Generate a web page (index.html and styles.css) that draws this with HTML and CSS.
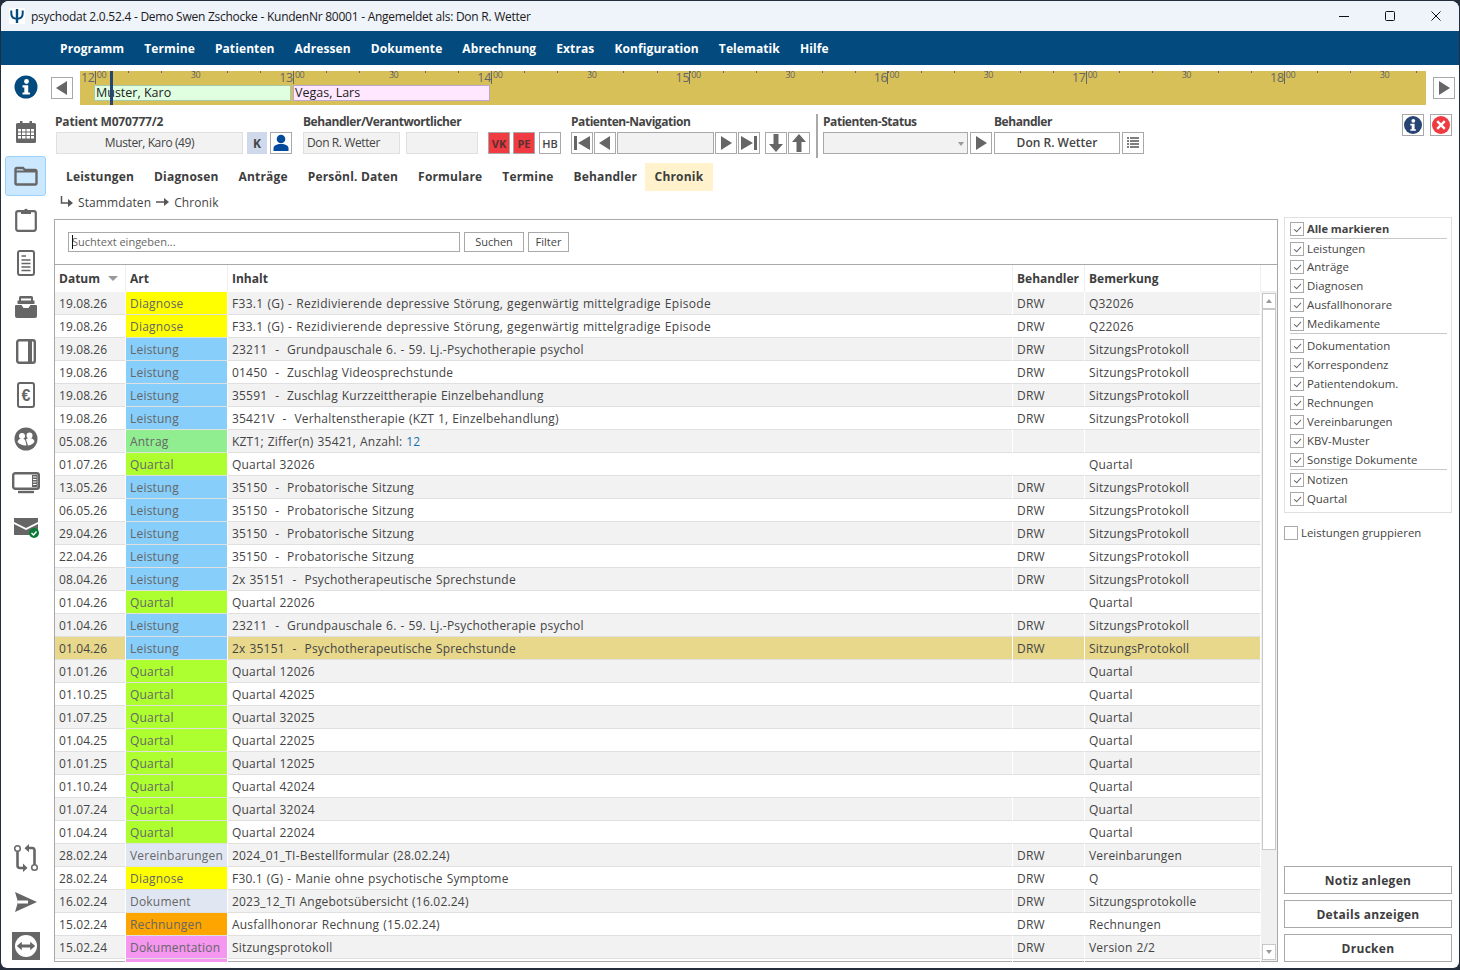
FILE: index.html
```html
<!DOCTYPE html>
<html lang="de">
<head>
<meta charset="utf-8">
<title>psychodat</title>
<link rel="stylesheet" href="styles.css">
</head>
<body>
<div class="window">
  <header class="titlebar">
    <svg class="logo" width="16" height="16" viewBox="0 0 16 16"><rect width="16" height="16" fill="#fff"/><path d="M2.300 2.500v3c0 3.300 2.200 5.200 5.700 5.200s5.700-1.900 5.700-5.200v-3" fill="none" stroke="#034a7e" stroke-width="2"/><path d="M8 1v14" stroke="#034a7e" stroke-width="2.400"/></svg>
    <span class="title-text">psychodat 2.0.52.4 - Demo Swen Zschocke - KundenNr 80001 - Angemeldet als: Don R. Wetter</span>
    <div class="winbtns">
      <svg width="12" height="12" viewBox="0 0 12 12"><path d="M1 6.500h10" stroke="#111" fill="none"/></svg>
      <svg width="12" height="12" viewBox="0 0 12 12"><rect x="1.500" y="1.500" width="9" height="9" rx="1" stroke="#111" fill="none"/></svg>
      <svg width="12" height="12" viewBox="0 0 12 12"><path d="M1.500 1.500l9 9M10.500 1.500l-9 9" stroke="#111" fill="none"/></svg>
    </div>
  </header>
  <nav class="menubar">
    <a>Programm</a><a>Termine</a><a>Patienten</a><a>Adressen</a><a>Dokumente</a><a>Abrechnung</a><a>Extras</a><a>Konfiguration</a><a>Telematik</a><a>Hilfe</a>
  </nav>
  <div class="body">
    <aside class="rail">
      <div class="rail-item"><svg width="24" height="24" viewBox="0 0 24 24"><circle cx="12" cy="12" r="11.500" fill="#034a7e"/><circle cx="12.500" cy="6.500" r="2.400" fill="#fff"/><path d="M8.500 10.300h5.700v7.200h1.700v2.100H8.500v-2.100h1.800v-5.100H8.500z" fill="#fff"/></svg></div>
      <div class="rail-item"><svg width="22" height="24" viewBox="0 0 22 24"><path d="M1 5.500A1.500 1.500 0 0 1 2.500 4H5V2h2.500v2h7V2H17v2h2.500A1.500 1.500 0 0 1 21 5.500v17a1.500 1.500 0 0 1-1.500 1.500h-17A1.500 1.500 0 0 1 1 22.500z" fill="#666"/><path d="M3 10h3v2.500H3zm4 0h3.500v2.500H7zm4.500 0H15v2.500h-3.500zm4.500 0h3v2.500h-3zM3 13.500h3V16H3zm4 0h3.500V16H7zm4.500 0H15V16h-3.500zm4.500 0h3V16h-3zM3 17h3v2.500H3zm4 0h3.500v2.500H7zm4.500 0H15v2.500h-3.500zm4.500 0h3v2.500h-3z" fill="#fff"/></svg></div>
      <div class="rail-item active"><svg width="24" height="20" viewBox="0 0 24 20"><path d="M1.500 3.500a1.500 1.500 0 0 1 1.500-1.500h6l2 2h10a1.500 1.500 0 0 1 1.500 1.500V17a1.500 1.500 0 0 1-1.500 1.500H3A1.500 1.500 0 0 1 1.500 17z" fill="none" stroke="#666" stroke-width="2.400"/><path d="M1.500 5.500h21" stroke="#666" stroke-width="1.800"/></svg></div>
      <div class="rail-item"><svg width="22" height="25" viewBox="0 0 22 25"><rect x="1.200" y="4.200" width="19.600" height="19.600" rx="2" fill="none" stroke="#666" stroke-width="2.200"/><path d="M6 3h3.200a2 2 0 0 1 3.600 0H16v4H6z" fill="#666"/></svg></div>
      <div class="rail-item"><svg width="18" height="26" viewBox="0 0 18 26"><rect x="1" y="1" width="16" height="24" rx="2" fill="none" stroke="#666" stroke-width="2"/><path d="M4.500 6H9M4.500 10h9M4.500 13.500h9M4.500 17h9M4.500 20.500h9" stroke="#666" stroke-width="1.700"/></svg></div>
      <div class="rail-item"><svg width="24" height="24" viewBox="0 0 24 24"><path d="M5 8V2.500A1.500 1.500 0 0 1 6.500 1h11A1.500 1.500 0 0 1 19 2.500V8h-2V3.500H7V8z" fill="#666"/><path d="M3.500 5.500h17V9h-17z" fill="#666"/><path d="M1 11a1 1 0 0 1 1-1h5.500l2 3h5l2-3H22a1 1 0 0 1 1 1v10a2 2 0 0 1-2 2H3a2 2 0 0 1-2-2z" fill="#666"/></svg></div>
      <div class="rail-item"><svg width="20" height="25" viewBox="0 0 20 25"><rect x="1.200" y="1.200" width="17.600" height="22.600" rx="2" fill="none" stroke="#666" stroke-width="2.400"/><path d="M12 1v23h4V1z" fill="#666"/></svg></div>
      <div class="rail-item"><svg width="18" height="26" viewBox="0 0 18 26"><rect x="1" y="1" width="16" height="24" rx="2" fill="none" stroke="#666" stroke-width="2"/><text class="euro" x="9" y="19" text-anchor="middle">€</text></svg></div>
      <div class="rail-item"><svg width="24" height="24" viewBox="0 0 24 24"><circle cx="12" cy="12" r="11.500" fill="#666"/><circle cx="8" cy="9" r="3" fill="#fff"/><circle cx="15.500" cy="8.500" r="3" fill="#fff"/><path d="M3.500 15c.5-2.500 2.500-3.500 4.500-3.500s3 1 3.500 2.500l1 4.500c-3 .5-7-1-9-3.500z" fill="#fff"/><path d="M12 12.500c1-1 2.200-1.500 3.500-1.500 2.500 0 4.500 1.500 5 3.500-1 2-3 3.500-6.500 4z" fill="#fff"/></svg></div>
      <div class="rail-item"><svg width="28" height="22" viewBox="0 0 28 22"><rect x="1.200" y="1.200" width="25.600" height="15.600" rx="2" fill="none" stroke="#666" stroke-width="2.400"/><path d="M20 3h5.500v12H20z" fill="#666"/><path d="M21 5h3.500M21 7.500h3.500M21 10h3.500M21 12.500h3.500" stroke="#fff"/><path d="M6 20h16" stroke="#666" stroke-width="2.400"/></svg></div>
      <div class="rail-item"><svg width="26" height="22" viewBox="0 0 26 22"><path d="M1 2h24v4L13 12 1 6z" fill="#666"/><path d="M1 8l12 6 12-6v11H1z" fill="#666"/><circle cx="21" cy="17" r="5" fill="#0a7a36"/><path d="M18.500 17l2 2 3-3.500" stroke="#fff" stroke-width="1.400" fill="none"/></svg></div>
      <div class="rail-spacer"></div>
      <div class="rail-item"><svg width="26" height="28" viewBox="0 0 26 28"><circle cx="4.500" cy="4.500" r="2.800" fill="none" stroke="#666" stroke-width="1.500"/><circle cx="21.500" cy="23.500" r="2.800" fill="none" stroke="#666" stroke-width="1.500"/><path d="M4.500 7.500v14a2.500 2.500 0 0 0 2.500 2.500h4M21.500 20.500v-14A2.500 2.500 0 0 0 19 4h-4" fill="none" stroke="#666" stroke-width="2.600"/><path d="M10 19.500l4.500 4.500-4.500 4zM16 0l-4.500 4.300 4.500 4z" fill="#666"/></svg></div>
      <div class="rail-item"><svg width="24" height="22" viewBox="0 0 24 22"><path d="M1 1l22 10L1 21l3-10z" fill="#666"/><path d="M4 9.500h10v3H4z" fill="#fff"/></svg></div>
      <div class="rail-item"><svg width="28" height="28" viewBox="0 0 28 28"><rect width="28" height="28" fill="#666"/><circle cx="14" cy="14" r="11" fill="#fff"/><path d="M4.800 14l5-4.200v2.600h8.400V9.800l5 4.200-5 4.200v-2.600H9.800v2.600z" fill="#666"/></svg></div>
    </aside>
    <main class="content">
      <div class="timeline-row">
        <button class="btn arrow-btn"><svg width="12" height="14" viewBox="0 0 12 14"><path d="M11 0v14L0 7z" fill="#666"/></svg></button>
        <div class="timeline">
          <div class="hour"><span class="hnum">12</span><span class="h00">00</span><span class="h30">30</span></div>
          <div class="hour"><span class="hnum">13</span><span class="h00">00</span><span class="h30">30</span></div>
          <div class="hour"><span class="hnum">14</span><span class="h00">00</span><span class="h30">30</span></div>
          <div class="hour"><span class="hnum">15</span><span class="h00">00</span><span class="h30">30</span></div>
          <div class="hour"><span class="hnum">16</span><span class="h00">00</span><span class="h30">30</span></div>
          <div class="hour"><span class="hnum">17</span><span class="h00">00</span><span class="h30">30</span></div>
          <div class="hour"><span class="hnum">18</span><span class="h00">00</span><span class="h30">30</span></div>
          <div class="appt appt-a">Muster, Karo</div>
          <div class="appt appt-b">Vegas, Lars</div>
          <div class="now"></div>
        </div>
        <button class="btn arrow-btn"><svg width="12" height="14" viewBox="0 0 12 14"><path d="M1 0v14l11-7z" fill="#666"/></svg></button>
      </div>

      <div class="patient-bar">
        <div class="group g-patient">
          <label class="lbl lbl-wide">Patient M070777/2</label>
          <div class="fields">
            <div class="field f-name">Muster, Karo (49)</div>
            <div class="kbadge">K</div>
            <button class="btn sq"><svg width="18" height="18" viewBox="0 0 18 18"><circle cx="9" cy="5" r="4.300" fill="#034a9c"/><path d="M1.500 17v-2.500C1.500 11.500 4.500 10 9 10s7.500 1.500 7.500 4.500V17z" fill="#034a9c"/></svg></button>
          </div>
        </div>
        <div class="group g-beh">
          <label class="lbl">Behandler/Verantwortlicher</label>
          <div class="fields">
            <div class="field f-beh">Don R. Wetter</div>
            <div class="field f-empty"></div>
            <button class="btn sq red vk">VK</button>
            <button class="btn sq red">PE</button>
            <button class="btn sq hb">HB</button>
          </div>
        </div>
        <div class="group g-nav">
          <label class="lbl">Patienten-Navigation</label>
          <div class="fields">
            <button class="btn sq"><svg width="16" height="14" viewBox="0 0 16 14"><path d="M0 0h3v14H0zM16 0v14L4 7z" fill="#666"/></svg></button>
            <button class="btn sq"><svg width="12" height="14" viewBox="0 0 12 14"><path d="M11 0v14L0 7z" fill="#666"/></svg></button>
            <div class="field f-nav"></div>
            <button class="btn sq"><svg width="12" height="14" viewBox="0 0 12 14"><path d="M1 0v14l11-7z" fill="#666"/></svg></button>
            <button class="btn sq"><svg width="16" height="14" viewBox="0 0 16 14"><path d="M13 0h3v14h-3zM0 0v14l12-7z" fill="#666"/></svg></button>
            <button class="btn sq gap-l"><svg width="14" height="18" viewBox="0 0 14 18"><path d="M4.500 0h5v10H14l-7 8-7-8h4.500z" fill="#666"/></svg></button>
            <button class="btn sq"><svg width="14" height="18" viewBox="0 0 14 18"><path d="M4.500 18h5V8H14L7 0 0 8h4.500z" fill="#666"/></svg></button>
          </div>
        </div>
        <div class="vsep"></div>
        <div class="group g-status">
          <label class="lbl">Patienten-Status</label>
          <div class="fields">
            <div class="field combo"><span class="caret"></span></div>
            <button class="btn sq"><svg width="12" height="14" viewBox="0 0 12 14"><path d="M1 0v14l11-7z" fill="#666"/></svg></button>
          </div>
        </div>
        <div class="group g-doc">
          <label class="lbl">Behandler</label>
          <div class="fields">
            <button class="btn doc-btn">Don R. Wetter</button>
            <button class="btn sq"><svg width="12" height="12" viewBox="0 0 12 12"><path d="M0 1h2M0 4h2M0 7h2M0 10h2M3 1h9M3 4h9M3 7h9M3 10h9" stroke="#555" stroke-width="1.300"/></svg></button>
          </div>
        </div>
        <div class="corner-btns">
          <button class="btn sq"><svg width="18" height="18" viewBox="0 0 18 18"><circle cx="9" cy="9" r="9" fill="#274472"/><circle cx="9.300" cy="4.800" r="1.900" fill="#fff"/><path d="M6.300 7.800h4.300v5.400h1.300v1.600H6.300v-1.600h1.400V9.400H6.300z" fill="#fff"/></svg></button>
          <button class="btn sq"><svg width="18" height="18" viewBox="0 0 18 18"><circle cx="9" cy="9" r="9" fill="#ee3a40"/><path d="M5.200 5.200l7.600 7.600M12.800 5.200l-7.600 7.600" stroke="#fff" stroke-width="2.400"/></svg></button>
        </div>
      </div>

      <div class="tabs">
        <a>Leistungen</a><a>Diagnosen</a><a>Anträge</a><a>Persönl. Daten</a><a>Formulare</a><a>Termine</a><a>Behandler</a><a class="on">Chronik</a>
      </div>
      <div class="crumb">
        <svg width="13" height="12" viewBox="0 0 13 12"><path d="M1.500 0v7h8" fill="none" stroke="#555" stroke-width="1.500"/><path d="M8 3l5 4-5 4z" fill="#555"/></svg>
        <span>Stammdaten</span>
        <svg width="13" height="10" viewBox="0 0 13 10"><path d="M0 5h9" stroke="#555" stroke-width="1.500"/><path d="M8 1l5 4-5 4z" fill="#555"/></svg>
        <span>Chronik</span>
      </div>

      <div class="work">
        <section class="panel">
          <div class="searchbar">
            <div class="search-input"><i class="cursor"></i>Suchtext eingeben...</div>
            <button class="btn small">Suchen</button>
            <button class="btn small filter">Filter</button>
          </div>
          <div class="grid">
            <div class="table-clip">
              <table class="chronik">
                <colgroup><col class="c1"><col class="c2"><col class="c3"><col class="c4"><col class="c5"></colgroup>
                <thead><tr><th>Datum <span class="sort"></span></th><th>Art</th><th>Inhalt</th><th>Behandler</th><th>Bemerkung</th></tr></thead>
                <tbody>
                  <tr><td>19.08.26</td><td class="k-dia">Diagnose</td><td class="wide">F33.1 (G) - Rezidivierende depressive Störung, gegenwärtig mittelgradige Episode</td><td>DRW</td><td>Q32026</td></tr>
                  <tr><td>19.08.26</td><td class="k-dia">Diagnose</td><td class="wide">F33.1 (G) - Rezidivierende depressive Störung, gegenwärtig mittelgradige Episode</td><td>DRW</td><td>Q22026</td></tr>
                  <tr><td>19.08.26</td><td class="k-lei">Leistung</td><td>23211 &nbsp;-&nbsp; Grundpauschale 6. - 59. Lj.-Psychotherapie psychol</td><td>DRW</td><td>SitzungsProtokoll</td></tr>
                  <tr><td>19.08.26</td><td class="k-lei">Leistung</td><td>01450 &nbsp;-&nbsp; Zuschlag Videosprechstunde</td><td>DRW</td><td>SitzungsProtokoll</td></tr>
                  <tr><td>19.08.26</td><td class="k-lei">Leistung</td><td>35591 &nbsp;-&nbsp; Zuschlag Kurzzeittherapie Einzelbehandlung</td><td>DRW</td><td>SitzungsProtokoll</td></tr>
                  <tr><td>19.08.26</td><td class="k-lei">Leistung</td><td>35421V &nbsp;-&nbsp; Verhaltenstherapie (KZT 1, Einzelbehandlung)</td><td>DRW</td><td>SitzungsProtokoll</td></tr>
                  <tr><td>05.08.26</td><td class="k-ant">Antrag</td><td>KZT1; Ziffer(n) 35421, Anzahl: <span class="num">12</span></td><td></td><td></td></tr>
                  <tr><td>01.07.26</td><td class="k-qua">Quartal</td><td>Quartal 32026</td><td></td><td>Quartal</td></tr>
                  <tr><td>13.05.26</td><td class="k-lei">Leistung</td><td>35150 &nbsp;-&nbsp; Probatorische Sitzung</td><td>DRW</td><td>SitzungsProtokoll</td></tr>
                  <tr><td>06.05.26</td><td class="k-lei">Leistung</td><td>35150 &nbsp;-&nbsp; Probatorische Sitzung</td><td>DRW</td><td>SitzungsProtokoll</td></tr>
                  <tr><td>29.04.26</td><td class="k-lei">Leistung</td><td>35150 &nbsp;-&nbsp; Probatorische Sitzung</td><td>DRW</td><td>SitzungsProtokoll</td></tr>
                  <tr><td>22.04.26</td><td class="k-lei">Leistung</td><td>35150 &nbsp;-&nbsp; Probatorische Sitzung</td><td>DRW</td><td>SitzungsProtokoll</td></tr>
                  <tr><td>08.04.26</td><td class="k-lei">Leistung</td><td>2x 35151 &nbsp;-&nbsp; Psychotherapeutische Sprechstunde</td><td>DRW</td><td>SitzungsProtokoll</td></tr>
                  <tr><td>01.04.26</td><td class="k-qua">Quartal</td><td>Quartal 22026</td><td></td><td>Quartal</td></tr>
                  <tr><td>01.04.26</td><td class="k-lei">Leistung</td><td>23211 &nbsp;-&nbsp; Grundpauschale 6. - 59. Lj.-Psychotherapie psychol</td><td>DRW</td><td>SitzungsProtokoll</td></tr>
                  <tr class="sel"><td>01.04.26</td><td class="k-lei">Leistung</td><td>2x 35151 &nbsp;-&nbsp; Psychotherapeutische Sprechstunde</td><td>DRW</td><td>SitzungsProtokoll</td></tr>
                  <tr><td>01.01.26</td><td class="k-qua">Quartal</td><td>Quartal 12026</td><td></td><td>Quartal</td></tr>
                  <tr><td>01.10.25</td><td class="k-qua">Quartal</td><td>Quartal 42025</td><td></td><td>Quartal</td></tr>
                  <tr><td>01.07.25</td><td class="k-qua">Quartal</td><td>Quartal 32025</td><td></td><td>Quartal</td></tr>
                  <tr><td>01.04.25</td><td class="k-qua">Quartal</td><td>Quartal 22025</td><td></td><td>Quartal</td></tr>
                  <tr><td>01.01.25</td><td class="k-qua">Quartal</td><td>Quartal 12025</td><td></td><td>Quartal</td></tr>
                  <tr><td>01.10.24</td><td class="k-qua">Quartal</td><td>Quartal 42024</td><td></td><td>Quartal</td></tr>
                  <tr><td>01.07.24</td><td class="k-qua">Quartal</td><td>Quartal 32024</td><td></td><td>Quartal</td></tr>
                  <tr><td>01.04.24</td><td class="k-qua">Quartal</td><td>Quartal 22024</td><td></td><td>Quartal</td></tr>
                  <tr><td>28.02.24</td><td class="k-doc">Vereinbarungen</td><td>2024_01_TI-Bestellformular (28.02.24)</td><td>DRW</td><td>Vereinbarungen</td></tr>
                  <tr><td>28.02.24</td><td class="k-dia">Diagnose</td><td>F30.1 (G) - Manie ohne psychotische Symptome</td><td>DRW</td><td>Q</td></tr>
                  <tr><td>16.02.24</td><td class="k-doc">Dokument</td><td>2023_12_TI Angebotsübersicht (16.02.24)</td><td>DRW</td><td>Sitzungsprotokolle</td></tr>
                  <tr><td>15.02.24</td><td class="k-rec">Rechnungen</td><td>Ausfallhonorar Rechnung (15.02.24)</td><td>DRW</td><td>Rechnungen</td></tr>
                  <tr><td>15.02.24</td><td class="k-vio">Dokumentation</td><td>Sitzungsprotokoll</td><td>DRW</td><td>Version 2/2</td></tr>
                  <tr><td></td><td class="k-vio"></td><td></td><td></td><td></td></tr>
                </tbody>
              </table>
            </div>
            <div class="scrollcol">
              <div class="sb-head"></div>
              <div class="sb-track">
                <div class="sb-btn"><span class="tri up"></span></div>
                <div class="sb-thumb"></div>
                <div class="sb-btn"><span class="tri down"></span></div>
              </div>
            </div>
          </div>
        </section>
        <aside class="side">
          <div class="checks">
            <div class="chk strong"><span class="box"></span>Alle markieren</div>
            <hr>
            <div class="chk"><span class="box"></span>Leistungen</div>
            <div class="chk tight"><span class="box"></span>Anträge</div>
            <div class="chk"><span class="box"></span>Diagnosen</div>
            <div class="chk"><span class="box"></span>Ausfallhonorare</div>
            <div class="chk"><span class="box"></span>Medikamente</div>
            <hr class="wide">
            <div class="chk"><span class="box"></span>Dokumentation</div>
            <div class="chk"><span class="box"></span>Korrespondenz</div>
            <div class="chk"><span class="box"></span>Patientendokum.</div>
            <div class="chk"><span class="box"></span>Rechnungen</div>
            <div class="chk"><span class="box"></span>Vereinbarungen</div>
            <div class="chk"><span class="box"></span>KBV-Muster</div>
            <div class="chk"><span class="box"></span>Sonstige Dokumente</div>
            <hr>
            <div class="chk"><span class="box"></span>Notizen</div>
            <div class="chk"><span class="box"></span>Quartal</div>
          </div>
          <div class="chk group-chk"><span class="box off"></span>Leistungen gruppieren</div>
          <div class="side-actions">
            <button class="btn action">Notiz anlegen</button>
            <button class="btn action">Details anzeigen</button>
            <button class="btn action">Drucken</button>
          </div>
        </aside>
      </div>
    </main>
  </div>
</div>
</body>
</html>
```
FILE: styles.css
```css
* { box-sizing: border-box; }
html, body { margin: 0; height: 970px; overflow: hidden; background: #232d3b; }
body { font-family: "Open Sans", "Noto Sans", sans-serif; font-size: 12px; color: #444; }
.window { margin: 1px 1px 2px 1px; height: 967px; background: #fff; border-radius: 8px 8px 6px 6px; overflow: hidden; display: flex; flex-direction: column; }

.titlebar { height: 30px; flex: none; background: #eff3fa; display: flex; align-items: center; color: #1a1a1a; }
.logo { margin-left: 8px; flex: none; }
.title-text { margin-left: 6px; letter-spacing: -0.25px; }
.winbtns { margin-left: auto; display: flex; gap: 34px; padding-right: 17px; }

.menubar { height: 34px; flex: none; background: #034a7e; display: flex; align-items: center; gap: 20px; padding-left: 59px; color: #fff; font-weight: 700; letter-spacing: 0.1px; }

.body { flex: 1; display: flex; min-height: 0; }
.rail { width: 47px; flex: none; display: flex; flex-direction: column; align-items: center; padding-left: 2px; }
.rail-item { width: 41px; height: 44px; flex: none; display: flex; align-items: center; justify-content: center; border: 1px solid transparent; border-radius: 3px; }
.rail-item.active { height: 40px; margin: 3px 0 1px; background: #cce8ff; border-color: #99d1ff; }
.rail-spacer { flex: 1; }
.euro { font: 700 16px "Liberation Sans", sans-serif; fill: #666; }

.content { flex: 1; min-width: 0; display: flex; flex-direction: column; padding-left: 3px; }
.btn { font: inherit; color: inherit; background: #fff; border: 1px solid #a9a9a9; padding: 0; display: flex; align-items: center; justify-content: center; }

.timeline-row { height: 34px; margin-top: 6px; flex: none; display: flex; align-items: center; }
.arrow-btn { width: 22px; height: 22px; flex: none; }
.timeline { width: 1346px; height: 34px; margin: 0 7px; background-color: #d8c058; padding-left: 14.700px; display: flex; position: relative;
  background-image: repeating-linear-gradient(90deg, #666 0 1px, transparent 1px 33.030px); background-repeat: no-repeat; background-size: 100% 2px; background-position: 14.700px 0; }
.hour { flex: 0 0 198.200px; height: 13px; border-left: 1px solid #666; position: relative; color: #666; }
.hour:last-of-type { flex-basis: 130px; }
.hnum { position: absolute; right: calc(100% + 1px); top: -1px; font-size: 12.500px; line-height: 16px; letter-spacing: -0.3px; }
.h00 { position: absolute; left: 1px; top: -2px; font-size: 9px; line-height: 12px; letter-spacing: -0.4px; }
.h30 { position: absolute; left: 95px; top: -2px; font-size: 9px; line-height: 12px; letter-spacing: -0.4px; }
.appt { position: absolute; top: 14px; height: 16px; width: 197px; border: 1px solid #a8c8a8; color: #222; line-height: 14px; padding-left: 1px; font-size: 12.500px; }
.appt-a { left: 14px; background: #e0ffe0; }
.appt-b { left: 213px; background: #ffe8ff; border-color: #b8a8d0; }
.now { position: absolute; left: 30px; top: 0; width: 3px; height: 34px; background: #274472; }

.patient-bar { height: 51px; margin-top: 4px; padding-left: 4px; flex: none; display: flex; align-items: flex-start; position: relative; }
.group { display: flex; flex-direction: column; padding-top: 5px; }
.lbl { font-weight: 700; line-height: 16px; height: 17px; white-space: nowrap; letter-spacing: -0.45px; }
.lbl-wide { letter-spacing: -0.18px; }
.fields { display: flex; gap: 1px; height: 22px; margin-top: 1px; }
.field { height: 22px; background: #f2f2f2; border: 1px solid #e0e0e0; display: flex; align-items: center; justify-content: center; padding-bottom: 1px; letter-spacing: -0.4px; }
.sq { width: 22px; height: 22px; flex: none; }
.g-patient { width: 248px; }
.f-name { width: 187px; margin-left: 1px; }
.kbadge { width: 20px; height: 22px; background: #d0d8ec; font-weight: 700; display: flex; align-items: center; justify-content: center; margin: 0 2px 0 3px; }
.g-beh { width: 268px; }
.f-beh { width: 97px; justify-content: flex-start; padding-left: 3px; }
.f-empty { width: 72px; margin-left: 5px; }
.red { background: #ef3b41; font-weight: 700; color: #5a3030; font-size: 11px; }
.vk { margin-left: 9px; margin-right: 2px; }
.red + .hb { margin-left: 3px; }
.hb { font-weight: 600; font-size: 11px; }
.g-nav { width: 245px; }
.f-nav { width: 97px; border-color: #a9a9a9; }
.gap-l { margin-left: 4px; }
.vsep { width: 2px; height: 44px; margin-top: 5px; background: #a9a9a9; margin-right: 5px; }
.g-status { width: 171px; }
.combo { width: 145px; border-color: #a9a9a9; position: relative; }
.caret { position: absolute; right: 3px; top: 9px; border: 3px solid transparent; border-top: 4px solid #999; border-bottom: 0; }
.combo + .sq { margin-left: 1px; }
.doc-btn { width: 126px; height: 22px; font-weight: 600; margin-right: 1px; padding-bottom: 2px; }
.corner-btns { position: absolute; left: 1351px; top: 5px; display: flex; gap: 6px; }

.tabs { height: 28px; margin-top: 3px; padding-left: 5px; flex: none; display: flex; gap: 0; }
.tabs a { font-weight: 700; padding: 0 10px; line-height: 28px; color: #3d3d3d; letter-spacing: 0.18px; }
.tabs a.on { background: #fff2cc; padding: 0 9.500px; margin-left: -2px; }
.crumb { height: 24px; padding: 0 0 2px 9px; flex: none; display: flex; align-items: center; gap: 5px; letter-spacing: 0.1px; }

.work { flex: 1; min-height: 0; display: flex; align-items: flex-start; margin-top: 4px; padding-left: 3px; }
.panel { width: 1224px; height: 743px; flex: none; border: 1px solid #a9a9a9; display: flex; flex-direction: column; }
.searchbar { height: 45px; flex: none; border-bottom: 1px solid #a9a9a9; display: flex; align-items: center; gap: 4px; padding: 0 0 1px 13px; }
.search-input { width: 392px; height: 20px; border: 1px solid #a9a9a9; padding-left: 3px; color: #666; font-size: 11px; line-height: 18px; position: relative; white-space: nowrap; }
.cursor { position: absolute; left: 3px; top: 2px; height: 14px; width: 1px; background: #111; }
.small { width: 60px; height: 20px; font-size: 11px; }
.filter { width: 41px; }

.grid { flex: 1; min-height: 0; display: flex; }
.table-clip { width: 1206px; height: 697px; overflow: hidden; flex: none; }
.chronik { table-layout: fixed; width: 1206px; border-collapse: separate; border-spacing: 0; }
.c1 { width: 71px; } .c2 { width: 102px; } .c3 { width: 785px; } .c4 { width: 72px; } .c5 { width: 176px; }
.chronik th { height: 27px; text-align: left; padding: 0 3px 1px 4px; font-weight: 700; color: #3d3d3d; border-right: 1px solid #eee; background: #fff; white-space: nowrap; }
.chronik td { height: 23px; padding: 0 4px; border-right: 1px solid #fff; border-bottom: 1px solid #e0e0e0; white-space: nowrap; overflow: hidden; letter-spacing: 0.2px; word-spacing: 0.6px; }
.chronik td:first-child { letter-spacing: 0.1px; }
.chronik td.wide { letter-spacing: 0.29px; }
.chronik tbody tr:nth-child(odd) td { background: #f2f2f2; }
.chronik td:nth-child(2) { color: #666; padding-left: 4px; }
.chronik tbody tr.sel td { background: #e8d88c; }
.chronik tbody tr td.k-dia { background: #ffff00; }
.chronik tbody tr td.k-lei { background: #87cefa; }
.chronik tbody tr td.k-ant { background: #90ee90; }
.chronik tbody tr td.k-qua { background: #adff2f; }
.chronik tbody tr td.k-doc { background: #e0e6f2; }
.chronik tbody tr td.k-rec { background: #ffa500; }
.chronik tbody tr td.k-vio { background: #f596f0; }
.num { color: #1a6fb0; }
.sort { display: inline-block; margin-left: 5px; vertical-align: 2px; border: 5px solid transparent; border-top: 5px solid #999; border-bottom: 0; }

.scrollcol { width: 16px; flex: none; display: flex; flex-direction: column; }
.sb-head { height: 27px; flex: none; border-bottom: 1px solid #eee; }
.sb-track { flex: 1; background: #f0f0f0; display: flex; flex-direction: column; padding: 1px 1px 0 1px; }
.sb-btn { height: 16px; flex: none; background: #fff; border: 1px solid #c8c8c8; display: flex; align-items: center; justify-content: center; }
.sb-thumb { height: 541px; flex: none; background: #fff; border: 1px solid #c8c8c8; margin-bottom: 94px; }
.tri { border: 3px solid transparent; }
.tri.up { border-top: 0; border-bottom: 4px solid #999; }
.tri.down { border-bottom: 0; border-top: 4px solid #999; }

.side { width: 168px; height: 746px; margin-left: 6px; margin-top: -2px; flex: none; display: flex; flex-direction: column; font-size: 11.400px; }
.checks { height: 296px; flex: none; border: 1px solid #e0e0e0; padding: 1px 4px 0 5px; }
.checks hr { border: 0; border-top: 1px solid #c8c8c8; margin: 0; height: 1px; }
.checks hr.wide { margin-bottom: 2px; }
.chk { display: flex; align-items: center; height: 19px; white-space: nowrap; }
.chk.tight { margin-top: -1px; }
.chk.strong { font-weight: 700; font-size: 11.100px; }
.box { width: 14px; height: 14px; flex: none; border: 1px solid #a9a9a9; margin-right: 3px; position: relative; }
.box::after { content: ""; position: absolute; left: 3px; top: 2px; width: 6px; height: 3px; border-left: 1.500px solid #666; border-bottom: 1.500px solid #666; transform: rotate(-48deg) translate(-1px, 1px); }
.box.off::after { display: none; }
.group-chk { margin-top: 10px; }
.side-actions { margin-top: auto; display: flex; flex-direction: column; gap: 6px; padding-bottom: 1px; font-size: 12px; }
.action { height: 28px; font-weight: 700; width: 168px; flex: none; color: #3d3d3d; letter-spacing: 0.3px; }
```
